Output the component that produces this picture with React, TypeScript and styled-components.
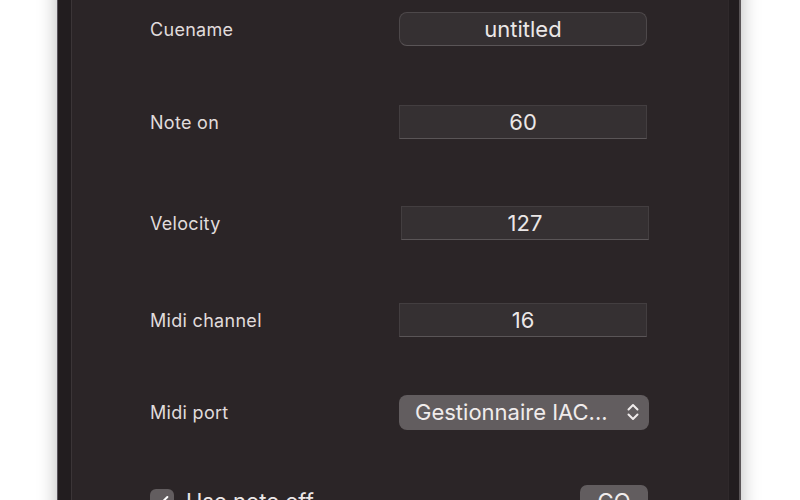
import { Check } from "lucide-react";
import styled, { createGlobalStyle } from "styled-components";

const GlobalStyle = createGlobalStyle`
  html, body {
    margin: 0;
    padding: 0;
    background: #ffffff;
    overflow: hidden;
  }
  body {
    font-family: Inter, "Noto Sans", "Liberation Sans", sans-serif;
  }
`;

type FieldRow = {
  label: string;
  value: string;
  kind: "text" | "number" | "popup";
  top: number;
  shift?: number;
};

const rows: FieldRow[] = [
  { label: "Cuename", value: "untitled", kind: "text", top: 12 },
  { label: "Note on", value: "60", kind: "number", top: 59 },
  { label: "Velocity", value: "127", kind: "number", top: 67, shift: 2 },
  { label: "Midi channel", value: "16", kind: "number", top: 63 },
  { label: "Midi port", value: "Gestionnaire IAC...", kind: "popup", top: 58 },
];

function UpDownIcon() {
  return (
    <svg width="14" height="20" viewBox="0 0 14 20" fill="none">
      <path
        d="M2.5 7.5 L7 3 L11.5 7.5 M2.5 12.5 L7 17 L11.5 12.5"
        stroke="currentColor"
        strokeWidth="2"
        strokeLinecap="round"
        strokeLinejoin="round"
      />
    </svg>
  );
}

export default function App() {
  return (
    <>
      <GlobalStyle />
      <Page>
        <Window>
          <Content>
            {rows.map((row) => (
              <Row key={row.label} $top={row.top}>
                <Label>{row.label}</Label>
                {row.kind === "popup" ? (
                  <Popup>
                    <span>{row.value}</span>
                    <UpDownIcon />
                  </Popup>
                ) : (
                  <Field $kind={row.kind} $shift={row.shift || 0}>
                    {row.value}
                  </Field>
                )}
              </Row>
            ))}
            <Footer>
              <CheckLabel>
                <CheckBox>
                  <Check size={16} strokeWidth={3} />
                </CheckBox>
                Use note off
              </CheckLabel>
              <GoButton type="button">GO</GoButton>
            </Footer>
          </Content>
        </Window>
      </Page>
    </>
  );
}

const Page = styled.div`
  width: 800px;
  height: 500px;
  display: flex;
  padding-left: 57px;
  box-sizing: border-box;
`;

const Window = styled.div`
  width: 684px;
  height: 560px;
  margin-top: -30px;
  background: #221d1f;
  border-left: 1px solid #57525a;
  border-right: 2px solid #5a5557;
  padding: 0 10px 0 13px;
  box-sizing: border-box;
  display: flex;
  box-shadow: 0 0 18px rgba(0, 0, 0, 0.28);
`;

const Content = styled.div`
  flex: 1;
  background: #2b2527;
  border-left: 1px solid #3b3537;
  border-right: 1px solid #2f292b;
  padding: 30px 0 0 78px;
  display: flex;
  flex-direction: column;
  color: #e2dede;
`;

const Row = styled.div<{ $top: number }>`
  display: flex;
  align-items: center;
  height: 34px;
  margin-top: ${(p) => p.$top}px;
`;

const Label = styled.div`
  width: 249px;
  font-size: 18px;
  letter-spacing: 0.3px;
  color: #e0dcdc;
`;

const Field = styled.div<{ $kind: string; $shift: number }>`
  width: 248px;
  height: 34px;
  box-sizing: border-box;
  margin-left: ${(p) => p.$shift}px;
  display: flex;
  align-items: center;
  justify-content: center;
  font-size: 22px;
  color: #ebe7e7;
  background: #353032;
  border: 1px solid ${(p) => (p.$kind === "text" ? "#4d484a" : "#433e40")};
  border-bottom-color: #5a5557;
  border-radius: ${(p) => (p.$kind === "text" ? "8px" : "0")};
`;

const Popup = styled.div`
  width: 250px;
  height: 35px;
  box-sizing: border-box;
  display: flex;
  align-items: center;
  justify-content: space-between;
  padding: 0 9px 0 16px;
  font-size: 22px;
  color: #f0ecec;
  background: #625d5f;
  border-radius: 8px;
`;

const Footer = styled.div`
  display: flex;
  align-items: flex-start;
  justify-content: space-between;
  width: 498px;
  margin-top: 56px;
`;

const CheckLabel = styled.div`
  display: flex;
  align-items: center;
  gap: 12px;
  font-size: 22px;
  color: #ebe7e7;
  margin-top: 3px;
`;

const CheckBox = styled.div`
  width: 24px;
  height: 24px;
  border-radius: 6px;
  background: #625d5f;
  display: flex;
  align-items: center;
  justify-content: center;
  color: #ffffff;
`;

const GoButton = styled.button`
  width: 68px;
  height: 32px;
  border: none;
  border-radius: 7px;
  background: #625d5f;
  color: #f0ecec;
  font-family: Inter, "Noto Sans", sans-serif;
  font-size: 22px;
  padding: 0;
`;
